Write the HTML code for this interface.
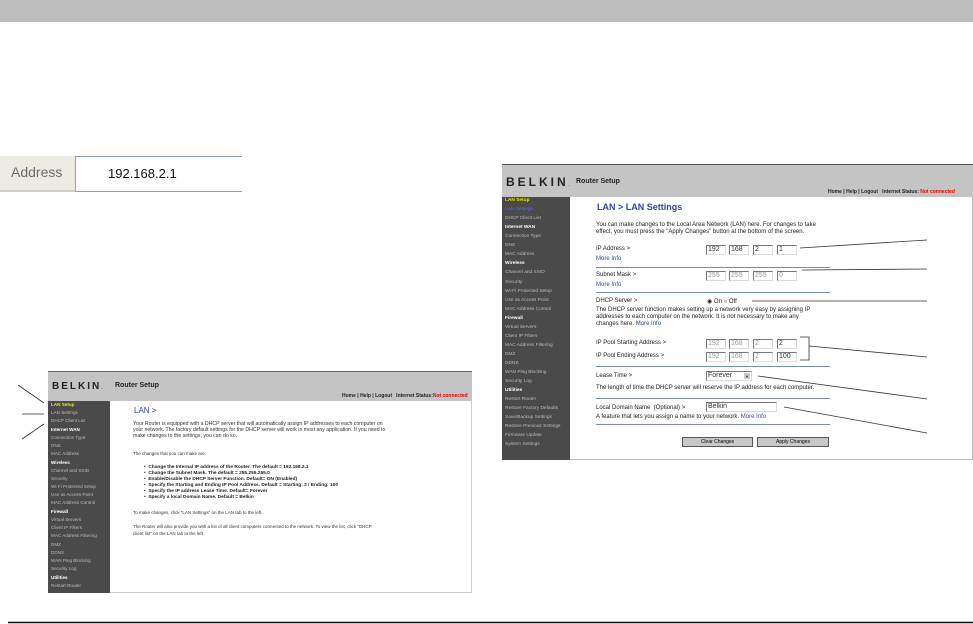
<!DOCTYPE html>
<html><head><meta charset="utf-8"><style>
*{margin:0;padding:0;box-sizing:border-box}
body{width:973px;height:624px;position:relative;background:#fff;font-family:"Liberation Sans",sans-serif;overflow:hidden}
.a{position:absolute;white-space:nowrap}
.sb div{position:absolute;white-space:nowrap;color:#bbb}
.sb .h{color:#fff;font-weight:bold}
.sb .y{color:#e8e800;font-weight:bold}
.sb .bl{color:#5566ff}
.in{position:absolute;border:1px solid #777;border-right-color:#ddd;border-bottom-color:#ddd;background:#fff;font-size:7px;color:#333;padding-left:1px;line-height:8px;height:10px}
.hr{position:absolute;height:1px;background:#7788bb}
.t{position:absolute;white-space:nowrap;font-size:6px;color:#222}
</style></head><body>
<div class="a" style="left:0;top:0;width:973px;height:22px;background:#bdbdbd"></div>

<!-- address bar -->
<div class="a" style="left:0;top:156px;width:75px;height:36px;background:#ecebe2;border-bottom:2px solid #d0cfc6"></div>
<div class="a" style="left:11px;top:164px;font-size:14px;color:#6b6b6b">Address</div>
<div class="a" style="left:75px;top:156px;width:167px;height:36px;background:#fff;border:1px solid #8aa0c8;border-right:none"></div>
<div class="a" style="left:108px;top:166px;font-size:13px;color:#111">192.168.2.1</div>

<!-- left screenshot -->
<div class="a" style="left:48px;top:371px;width:424px;height:222px;border:1px solid #ccc;background:#fff"></div>
<div class="a" style="left:48px;top:371px;width:424px;height:30px;background:#c4c4c4;border-top:1px solid #666"></div>
<div class="a" style="left:52px;top:381px;font-size:10px;font-weight:bold;letter-spacing:2px;color:#222">BELKIN<span style="font-size:4px;letter-spacing:0">.</span></div>
<div class="a" style="left:115px;top:382px;font-size:7px;font-weight:bold;color:#222">Router Setup</div>
<div class="a" style="left:342px;top:393px;font-size:5px;color:#222;font-weight:bold">Home | Help | Logout &nbsp; Internet Status:<span style="color:#e00">Not connected</span></div>
<div class="a sb" style="left:48px;top:401px;width:62px;height:192px;background:#4a4a4a;font-size:4.6px">
<div class="y" style="left:3px;top:1px">LAN Setup</div>
<div style="left:3px;top:9px">LAN Settings</div>
<div style="left:3px;top:17px">DHCP Client List</div>
<div class="h" style="left:3px;top:26px">Internet WAN</div>
<div style="left:3px;top:34px">Connection Type</div>
<div style="left:3px;top:42px">DNS</div>
<div style="left:3px;top:50px">MAC Address</div>
<div class="h" style="left:3px;top:59px">Wireless</div>
<div style="left:3px;top:67px">Channel and SSID</div>
<div style="left:3px;top:75px">Security</div>
<div style="left:3px;top:83px">Wi-Fi Protected Setup</div>
<div style="left:3px;top:91px">Use as Access Point</div>
<div style="left:3px;top:99px">MAC Address Control</div>
<div class="h" style="left:3px;top:108px">Firewall</div>
<div style="left:3px;top:116px">Virtual Servers</div>
<div style="left:3px;top:124px">Client IP Filters</div>
<div style="left:3px;top:132px">MAC Address Filtering</div>
<div style="left:3px;top:141px">DMZ</div>
<div style="left:3px;top:149px">DDNS</div>
<div style="left:3px;top:157px">WAN Ping Blocking</div>
<div style="left:3px;top:165px">Security Log</div>
<div class="h" style="left:3px;top:174px">Utilities</div>
<div style="left:3px;top:182px">Restart Router</div>
</div>
<div class="a" style="left:134px;top:406px;font-size:8px;color:#3344aa">LAN &gt;</div>
<div class="a" style="left:133px;top:421px;font-size:5.2px;color:#333;line-height:6px">Your Router is equipped with a DHCP server that will automatically assign IP addresses to each computer on<br>your network. The factory default settings for the DHCP server will work in most any application. If you need to<br>make changes to the settings, you can do so.</div>
<div class="a" style="left:133px;top:451px;font-size:4.5px;color:#333">The changes that you can make are:</div>
<div class="a" style="left:144px;top:465px;font-size:4.8px;color:#222;font-weight:bold;line-height:6px">&bull; &nbsp;Change the Internal IP address of the Router. The default = 192.168.2.1<br>&bull; &nbsp;Change the Subnet Mask. The default = 255.255.255.0<br>&bull; &nbsp;Enable/Disable the DHCP Server Function. Default= ON (Enabled)<br>&bull; &nbsp;Specify the Starting and Ending IP Pool Address. Default = Starting: 2 / Ending: 100<br>&bull; &nbsp;Specify the IP address Lease Time. Default= Forever<br>&bull; &nbsp;Specify a local Domain Name. Default = Belkin</div>
<div class="a" style="left:133px;top:510px;font-size:4.5px;color:#333">To make changes, click "LAN Settings" on the LAN tab to the left.</div>
<div class="a" style="left:133px;top:523px;font-size:4.5px;color:#333;line-height:7px">The Router will also provide you with a list of all client computers connected to the network. To view the list, click "DHCP<br>client list" on the LAN tab to the left.</div>

<!-- right screenshot -->
<div class="a" style="left:502px;top:164px;width:471px;height:296px;border:1px solid #bbb;background:#fff"></div>
<div class="a" style="left:502px;top:164px;width:471px;height:33px;background:#c4c4c4;border-top:1px solid #555"></div>
<div class="a" style="left:506px;top:175px;font-size:12px;font-weight:bold;letter-spacing:3px;color:#222">BELKIN<span style="font-size:4px;letter-spacing:0">.</span></div>
<div class="a" style="left:576px;top:178px;font-size:7px;font-weight:bold;color:#222">Router Setup</div>
<div class="a" style="left:828px;top:189px;font-size:5px;color:#222;font-weight:bold">Home | Help | Logout &nbsp; Internet Status: <span style="color:#e00">Not connected</span></div>
<div class="a sb" style="left:502px;top:197px;width:68px;height:263px;background:#4a4a4a;font-size:4.8px">
<div class="y" style="left:3px;top:1px">LAN Setup</div>
<div class="bl" style="left:3px;top:10px">LAN Settings</div>
<div style="left:3px;top:19px">DHCP Client List</div>
<div class="h" style="left:3px;top:28px">Internet WAN</div>
<div style="left:3px;top:37px">Connection Type</div>
<div style="left:3px;top:46px">DNS</div>
<div style="left:3px;top:55px">MAC Address</div>
<div class="h" style="left:3px;top:64px">Wireless</div>
<div style="left:3px;top:73px">Channel and SSID</div>
<div style="left:3px;top:83px">Security</div>
<div style="left:3px;top:92px">Wi-Fi Protected Setup</div>
<div style="left:3px;top:101px">Use as Access Point</div>
<div style="left:3px;top:110px">MAC Address Control</div>
<div class="h" style="left:3px;top:119px">Firewall</div>
<div style="left:3px;top:128px">Virtual Servers</div>
<div style="left:3px;top:137px">Client IP Filters</div>
<div style="left:3px;top:146px">MAC Address Filtering</div>
<div style="left:3px;top:155px">DMZ</div>
<div style="left:3px;top:164px">DDNS</div>
<div style="left:3px;top:173px">WAN Ping Blocking</div>
<div style="left:3px;top:182px">Security Log</div>
<div class="h" style="left:3px;top:191px">Utilities</div>
<div style="left:3px;top:200px">Restart Router</div>
<div style="left:3px;top:209px">Restore Factory Defaults</div>
<div style="left:3px;top:218px">Save/Backup Settings</div>
<div style="left:3px;top:227px">Restore Previous Settings</div>
<div style="left:3px;top:236px">Firmware Update</div>
<div style="left:3px;top:245px">System Settings</div>
</div>
<div class="a" style="left:597px;top:202px;font-size:9px;font-weight:bold;color:#3344aa">LAN &gt; LAN Settings</div>
<div class="t" style="top:222px;left:596px;line-height:7px">You can make changes to the Local Area Network (LAN) here. For changes to take<br>effect, you must press the "Apply Changes" button at the bottom of the screen.</div>
<div class="t" style="top:246px;left:596px">IP Address &gt;</div>
<div class="t" style="top:256px;left:596px;color:#3344aa">More Info</div>
<div class="in" style="left:706px;top:245px;width:20px">192</div>
<div class="in" style="left:729px;top:245px;width:20px">168</div>
<div class="in" style="left:753px;top:245px;width:20px">2</div>
<div class="in" style="left:777px;top:245px;width:20px">1</div>
<div class="hr" style="left:596px;top:267px;width:234px"></div>
<div class="t" style="top:272px;left:596px">Subnet Mask &gt;</div>
<div class="t" style="top:282px;left:596px;color:#3344aa">More Info</div>
<div class="in" style="left:706px;top:271px;width:20px;color:#999">255</div>
<div class="in" style="left:729px;top:271px;width:20px;color:#999">255</div>
<div class="in" style="left:753px;top:271px;width:20px;color:#999">255</div>
<div class="in" style="left:777px;top:271px;width:20px;color:#999">0</div>
<div class="hr" style="left:596px;top:292px;width:234px"></div>
<div class="t" style="top:298px;left:596px">DHCP Server &gt;</div>
<div class="t" style="top:298px;left:707px">&#9673; On &#9675; Off</div>
<div class="t" style="top:307px;left:596px;line-height:7px">The DHCP server function makes setting up a network very easy by assigning IP<br>addresses to each computer on the network. It is not necessary to make any<br>changes here. <span style="color:#3344aa">More Info</span></div>
<div class="t" style="top:340px;left:596px">IP Pool Starting Address &gt;</div>
<div class="t" style="top:353px;left:596px">IP Pool Ending Address &gt;</div>
<div class="in" style="left:706px;top:339px;width:20px;color:#999">192</div>
<div class="in" style="left:729px;top:339px;width:20px;color:#999">168</div>
<div class="in" style="left:753px;top:339px;width:20px;color:#999">2</div>
<div class="in" style="left:777px;top:339px;width:20px">2</div>
<div class="in" style="left:706px;top:352px;width:20px;color:#999">192</div>
<div class="in" style="left:729px;top:352px;width:20px;color:#999">168</div>
<div class="in" style="left:753px;top:352px;width:20px;color:#999">2</div>
<div class="in" style="left:777px;top:352px;width:20px">100</div>
<div class="hr" style="left:596px;top:366px;width:234px"></div>
<div class="t" style="top:373px;left:596px">Lease Time &gt;</div>
<div class="in" style="left:706px;top:371px;width:46px">Forever<span style="position:absolute;right:1px;top:1px;width:6px;height:6px;background:#ccc;font-size:4px;text-align:center">&#9660;</span></div>
<div class="t" style="top:385px;left:596px">The length of time the DHCP server will reserve the IP address for each computer.</div>
<div class="hr" style="left:596px;top:398px;width:234px"></div>
<div class="t" style="top:405px;left:596px">Local Domain Name &nbsp;(Optional) &gt;</div>
<div class="in" style="left:706px;top:402px;width:71px">Belkin</div>
<div class="t" style="top:414px;left:596px">A feature that lets you assign a name to your network. <span style="color:#3344aa">More Info</span></div>
<div class="hr" style="left:596px;top:424px;width:234px"></div>
<div class="a" style="left:682px;top:437px;width:71px;height:10px;background:#c8c8c8;border:1px solid #555;font-size:5px;text-align:center;line-height:8px">Clear Changes</div>
<div class="a" style="left:757px;top:437px;width:72px;height:10px;background:#c8c8c8;border:1px solid #555;font-size:5px;text-align:center;line-height:8px">Apply Changes</div>

<svg class="a" style="left:0;top:0" width="973" height="624">
<g stroke="#333" stroke-width="0.8" fill="none">
<line x1="18" y1="385" x2="44" y2="403"/>
<line x1="22" y1="414" x2="44" y2="414"/>
<line x1="22" y1="439" x2="44" y2="424"/>
<line x1="800" y1="248" x2="927" y2="240"/>
<line x1="802" y1="270" x2="927" y2="269"/>
<line x1="752" y1="301" x2="927" y2="301"/>
<polyline points="800,337 809,337 809,360 800,360"/>
<line x1="809" y1="346" x2="927" y2="357"/>
<line x1="758" y1="376" x2="927" y2="399"/>
<line x1="784" y1="407" x2="927" y2="433"/>
</g>
<line x1="8" y1="622.5" x2="973" y2="622.5" stroke="#111" stroke-width="1.5"/>
</svg>
</body></html>
